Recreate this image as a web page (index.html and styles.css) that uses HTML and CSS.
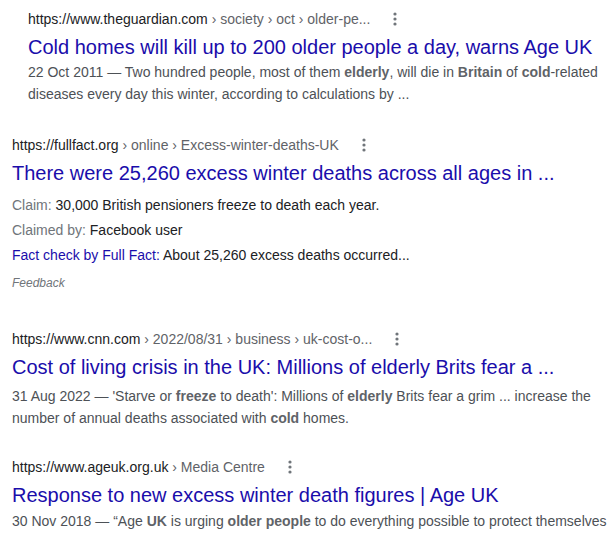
FILE: index.html
```html
<!DOCTYPE html>
<html>
<head>
<meta charset="utf-8">
<link rel="stylesheet" href="styles.css">
</head>
<body>
<div class="results">
  <div class="result indented">
    <div class="cite-row">
      <cite class="cite">https://www.theguardian.com<span class="crumbs"> › society › oct › older-pe...</span></cite>
      <span class="more"><svg width="4" height="14" viewBox="0 0 4 14"><circle cx="2" cy="2" r="1.6"/><circle cx="2" cy="7" r="1.6"/><circle cx="2" cy="12" r="1.6"/></svg></span>
    </div>
    <h3 class="title">Cold homes will kill up to 200 older people a day, warns Age UK</h3>
    <div class="snippet s1">22 Oct 2011 — Two hundred people, most of them <b>elderly</b>, will die in <b>Britain</b> of <b>cold</b>-related<br>diseases every day this winter, according to calculations by ...</div>
  </div>

  <div class="result factcheck">
    <div class="cite-row">
      <cite class="cite">https://fullfact.org<span class="crumbs"> › online › Excess-winter-deaths-UK</span></cite>
      <span class="more"><svg width="4" height="14" viewBox="0 0 4 14"><circle cx="2" cy="2" r="1.6"/><circle cx="2" cy="7" r="1.6"/><circle cx="2" cy="12" r="1.6"/></svg></span>
    </div>
    <h3 class="title">There were 25,260 excess winter deaths across all ages in ...</h3>
    <div class="fc-rows">
      <div class="fc-row"><span class="label">Claim:</span> 30,000 British pensioners freeze to death each year.</div>
      <div class="fc-row"><span class="label">Claimed by:</span> Facebook user</div>
      <div class="fc-row"><span class="link">Fact check by <span class="visited">Full Fact</span>:</span> About 25,260 excess deaths occurred...</div>
    </div>
    <div class="feedback">Feedback</div>
  </div>

  <div class="result r3">
    <div class="cite-row">
      <cite class="cite">https://www.cnn.com<span class="crumbs"> › 2022/08/31 › business › uk-cost-o...</span></cite>
      <span class="more"><svg width="4" height="14" viewBox="0 0 4 14"><circle cx="2" cy="2" r="1.6"/><circle cx="2" cy="7" r="1.6"/><circle cx="2" cy="12" r="1.6"/></svg></span>
    </div>
    <h3 class="title">Cost of living crisis in the UK: Millions of elderly Brits fear a ...</h3>
    <div class="snippet s3">31 Aug 2022 — 'Starve or <b>freeze</b> to death': Millions of <b>elderly</b> Brits fear a grim ... increase the<br>number of annual deaths associated with <b>cold</b> homes.</div>
  </div>

  <div class="result">
    <div class="cite-row">
      <cite class="cite">https://www.ageuk.org.uk<span class="crumbs"> › Media Centre</span></cite>
      <span class="more"><svg width="4" height="14" viewBox="0 0 4 14"><circle cx="2" cy="2" r="1.6"/><circle cx="2" cy="7" r="1.6"/><circle cx="2" cy="12" r="1.6"/></svg></span>
    </div>
    <h3 class="title">Response to new excess winter death figures | Age UK</h3>
    <div class="snippet s4">30 Nov 2018 — “Age <b>UK</b> is urging <b>older people</b> to do everything possible to protect themselves</div>
  </div>
</div>
</body>
</html>
```

FILE: styles.css
```css
html, body {
  margin: 0;
  padding: 0;
  background: #ffffff;
  overflow: hidden;
}
body {
  font-family: Arial, "Liberation Sans", sans-serif;
  color: #202124;
}
.results {
  display: flex;
  flex-direction: column;
  padding: 10px 0 0 12px;
}
.result {
  display: flex;
  flex-direction: column;
  margin-bottom: 31px;
}
.result.indented {
  padding-left: 16px;
}
.result.factcheck {
  margin-bottom: 39px;
}
.result.r3 {
  margin-bottom: 29px;
}
.cite-row {
  display: flex;
  align-items: center;
  height: 18px;
  white-space: nowrap;
}
.cite {
  font-style: normal;
  font-size: 14px;
  line-height: 18px;
  color: #202124;
}
.crumbs {
  color: #5f6368;
}
.more {
  display: flex;
  align-items: center;
  justify-content: center;
  width: 24px;
  height: 18px;
  margin-left: 13px;
  fill: #70757a;
}
.title {
  margin: 6px 0 0 0;
  font-weight: normal;
  font-size: 20px;
  line-height: 26px;
  color: #1a0dab;
  white-space: nowrap;
}
.snippet {
  font-size: 14px;
  line-height: 22px;
  color: #4d5156;
  white-space: nowrap;
}
.snippet.s1 {
  margin-top: 1px;
}
.snippet.s3 {
  margin-top: 5px;
}
.snippet.s4 {
  margin-top: 2px;
}
.snippet b {
  color: #5f6368;
  font-weight: bold;
}
.fc-rows {
  display: flex;
  flex-direction: column;
  margin-top: 7px;
}
.fc-row {
  font-size: 14px;
  line-height: 25px;
  color: #202124;
  white-space: nowrap;
}
.label {
  color: #70757a;
}
.link {
  color: #1a0dab;
}
.visited {
  color: #1a0dab;
}
.feedback {
  margin-top: 7px;
  font-size: 12px;
  line-height: 16px;
  font-style: italic;
  color: #70757a;
}
```
